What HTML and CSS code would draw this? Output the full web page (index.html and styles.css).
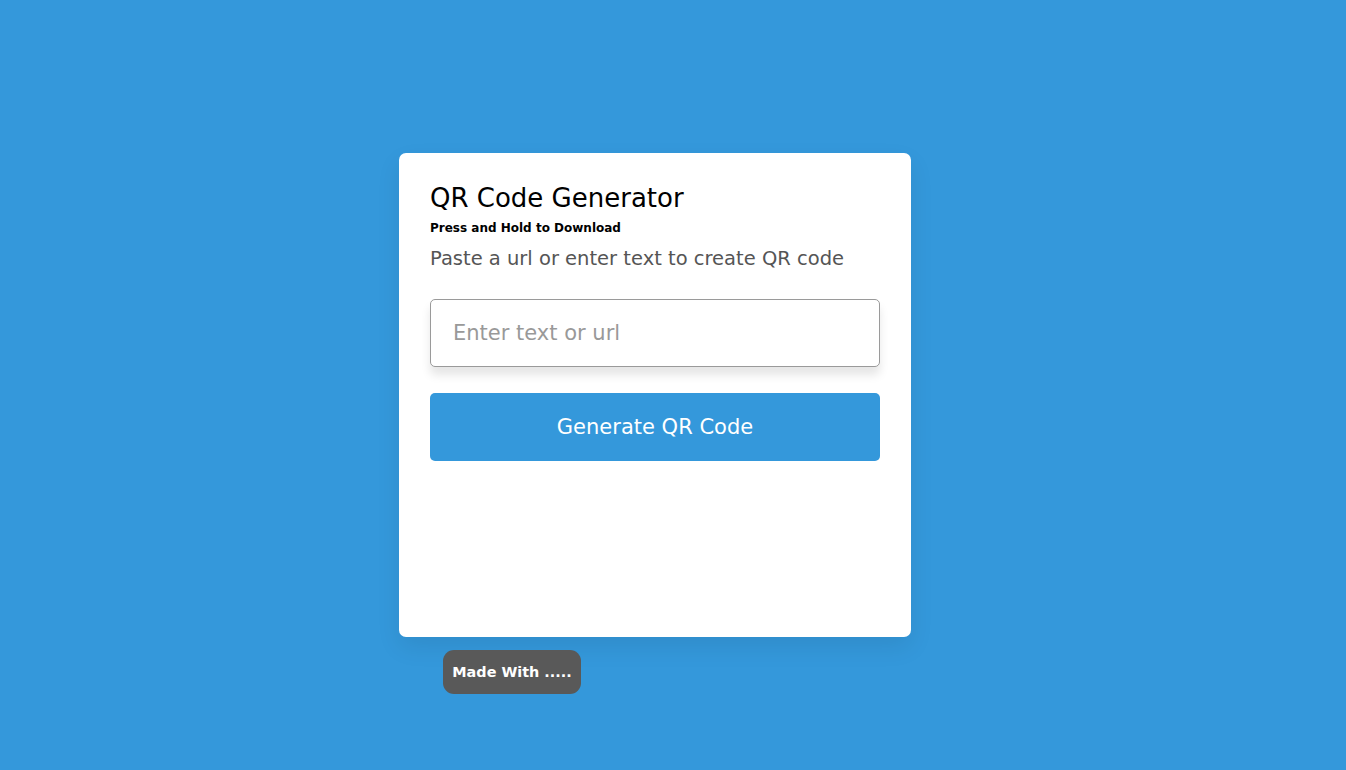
FILE: index.html
```html
<!DOCTYPE html>
<html lang="en">
<head>
<meta charset="utf-8">
<title>QR Code Generator</title>
<link rel="stylesheet" href="styles.css">
</head>
<body>
<main class="page">
  <section class="card">
    <h1 class="title">QR Code Generator</h1>
    <p class="hint">Press and Hold to Download</p>
    <p class="lead">Paste a url or enter text to create QR code</p>
    <input class="field" type="text" placeholder="Enter text or url">
    <button class="generate" type="button">Generate QR Code</button>
  </section>
  <div class="badge">Made With .....</div>
</main>
</body>
</html>
```
FILE: styles.css
```css
* { box-sizing: border-box; }
html, body { margin: 0; height: 100%; }
body {
  background: #3498db;
  font-family: "DejaVu Sans", "Noto Sans", sans-serif;
}
.page {
  display: flex;
  flex-direction: column;
  align-items: flex-start;
  padding: 153px 0 0 399px;
}
.card {
  width: 512px;
  height: 484px;
  background: #fff;
  border-radius: 7px;
  padding: 29px 31px;
  display: flex;
  flex-direction: column;
  box-shadow: 0 10px 25px rgba(0, 0, 0, 0.08);
}
.title {
  margin: 0;
  font-size: 26px;
  font-weight: 400;
  line-height: 32px;
  color: #000;
}
.hint {
  margin: 6px 0 0;
  font-size: 12px;
  font-weight: 700;
  line-height: 16px;
  color: #000;
}
.lead {
  margin: 9px 0 0;
  font-size: 19.5px;
  line-height: 28px;
  color: #555;
}
.field {
  margin-top: 26px;
  width: 450px;
  height: 68px;
  border: 1px solid #9a9a9a;
  border-radius: 5px;
  padding: 0 22px;
  font-family: inherit;
  font-size: 21px;
  color: #333;
  box-shadow: 0 8px 10px rgba(0, 0, 0, 0.1);
  outline: none;
}
.field::placeholder { color: #999; }
.generate {
  margin-top: 26px;
  width: 450px;
  height: 68px;
  border: 0;
  border-radius: 5px;
  background: #3498db;
  color: #fff;
  font-family: inherit;
  font-size: 21px;
  cursor: pointer;
}
.badge {
  margin: 13px 0 0 44px;
  width: 138px;
  height: 44px;
  border-radius: 11px;
  background: #595959;
  color: #fff;
  font-size: 14.4px;
  font-weight: 700;
  display: flex;
  align-items: center;
  justify-content: center;
}
```
